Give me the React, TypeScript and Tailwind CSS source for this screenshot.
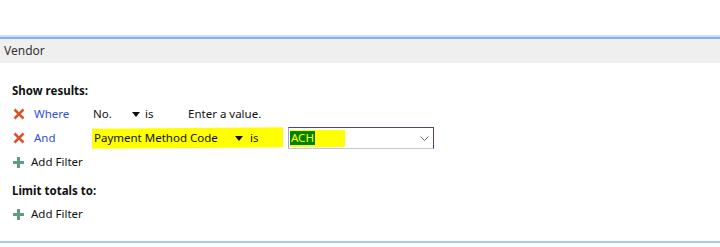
import { ReactNode } from "react";

const font = { fontFamily: '"Noto Sans", "Open Sans", sans-serif' };

function RemoveIcon() {
  return (
    <svg width="12" height="12" viewBox="0 0 12 12" className="block">
      <path d="M1.5 1.5 L10.5 10.5 M10.5 1.5 L1.5 10.5" stroke="#d9542e" strokeWidth="2.6" strokeLinecap="butt" />
    </svg>
  );
}

function AddIcon() {
  return (
    <svg width="11" height="11" viewBox="0 0 11 11" className="block">
      <path d="M5.5 0 V11 M0 5.5 H11" stroke="#5f9c80" strokeWidth="3" />
    </svg>
  );
}

function Caret() {
  return (
    <svg width="8" height="5" viewBox="0 0 8 5" className="block">
      <path d="M0 0 H8 L4 5 Z" fill="#111" />
    </svg>
  );
}

function AddFilter() {
  return (
    <div className="flex h-6 items-center pl-[13px]">
      <span className="w-[18px]">
        <AddIcon />
      </span>
      <span className="text-[#111]">Add Filter</span>
    </div>
  );
}

function Heading({ children }: { children: ReactNode }) {
  return (
    <div className="flex h-[23px] items-center pl-3 font-bold text-[#111]">
      {children}
    </div>
  );
}

export default function App() {
  return (
    <div className="h-[247px] w-[720px] overflow-hidden bg-white text-[11.5px]" style={font}>
      <div className="h-[35px]" />
      <div className="h-[2px] bg-[#cddff7]" />
      <div className="h-[2px] bg-[#84b3f5]" />
      <div className="flex h-[24px] items-center bg-[#efefef] pl-1 text-[12px] text-[#333]">
        Vendor
      </div>

      <div className="pt-4">
        <Heading>Show results:</Heading>

        <div className="flex h-6 items-center pl-[13px]">
          <span className="w-[21px]">
            <RemoveIcon />
          </span>
          <span className="w-[59px] text-[#2f50d8]">Where</span>
          <span className="w-[39px] text-[#111]">No.</span>
          <span className="w-[13px]">
            <Caret />
          </span>
          <span className="w-[43px] text-[#111]">is</span>
          <span className="text-[#111]">Enter a value.</span>
        </div>

        <div className="relative flex h-6 items-center pl-[13px]">
          <div className="absolute left-[92px] top-[2px] h-[20px] w-[191px] -skew-y-[0.5deg] bg-[#ffff00]" />
          <span className="relative w-[21px]">
            <RemoveIcon />
          </span>
          <span className="relative w-[59px] text-[#2f50d8]">And</span>
          <span className="relative w-[142px] pl-px text-[#111]">Payment Method Code</span>
          <span className="relative w-[15px]">
            <Caret />
          </span>
          <span className="relative w-[38px] text-[#111]">is</span>
          <div className="relative flex h-[22px] w-[146px] items-center border border-[#4d4196] border-b-[#c9c3e3] border-l-[#a8a2cf] pl-px">
            <span className="flex h-[17px] w-[55px] items-center bg-[#ffff00]">
              <span className="bg-[#008000] px-px leading-[14px] text-[#ffff00]">ACH</span>
            </span>
            <svg width="9" height="5" viewBox="0 0 9 5" className="ml-auto mr-[4px]">
              <path d="M0.5 0.5 L4.5 4.5 L8.5 0.5" fill="none" stroke="#666" strokeWidth="1" />
            </svg>
          </div>
        </div>

        <AddFilter />

        <div className="mt-[5px]">
          <Heading>Limit totals to:</Heading>
        </div>
        <AddFilter />
      </div>

      <div className="h-[15px]" />
      <div className="h-[2px] bg-[#a9c9f5]" />
    </div>
  );
}
